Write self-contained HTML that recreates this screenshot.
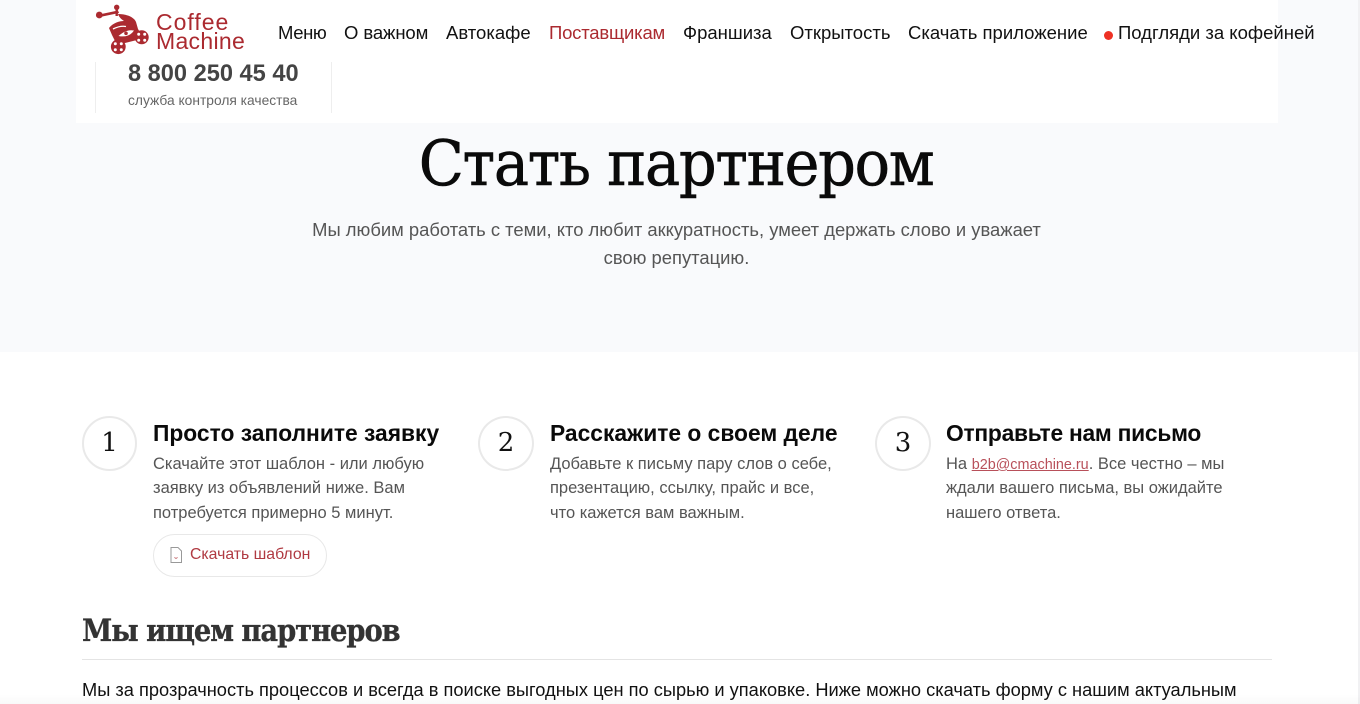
<!DOCTYPE html>
<html lang="ru">
<head>
<meta charset="utf-8">
<title>Стать партнером</title>
<style>
html,body{margin:0;padding:0;}
body{position:relative;width:1360px;height:704px;overflow:hidden;background:#fff;font-family:"Liberation Sans",Arial,sans-serif;color:#000;}
.t{position:absolute;white-space:nowrap;}
.a{position:absolute;}
.nav{top:21px;font-size:18.5px;line-height:23px;color:#111;}
.n{width:55px;height:55px;border:2px solid #e9e9e9;border-radius:50%;box-sizing:border-box;text-align:center;top:416px;font-family:"DejaVu Serif","Liberation Serif",serif;font-size:26px;line-height:50px;color:#111;}
.h3{top:419px;font-size:22.8px;line-height:28px;font-weight:bold;color:#0a0a0a;}
.p{top:452px;font-size:16.5px;line-height:24px;color:#555;}
.p div+div+div{margin-top:1px;}
</style>
</head>
<body>
<div class="a" style="left:0;top:0;width:1360px;height:352px;background:#f9fafc"></div>
<div class="a" style="left:76px;top:0;width:1202px;height:123px;background:#fff"></div>
<div class="a" style="left:1358px;top:0;width:2px;height:704px;background:#f1f1f3"></div>

<svg class="a" style="left:93px;top:2px" width="60" height="54" viewBox="0 0 60 54">
<g fill="#ab2a30">
<circle cx="6.300" cy="13" r="3.400"/>
<path d="M6 12.500 L25 8.500 L26 11 L7 15 Z"/>
<circle cx="23.700" cy="5.300" r="2.700"/>
<rect x="22.500" y="5" width="2.400" height="9"/>
<path d="M25 12 C33 12 41 15 43 20 L45 27 L48 32 L44 38 L24 43 L19 33 L16 26 C20 21 26 19 31 19 C28 17 26 15 25 12 Z"/>
<circle cx="25.300" cy="44.700" r="7.400"/>
<circle cx="48.700" cy="35.300" r="7"/>
</g>
<path d="M20 27 Q27 23.500 33 24.500" fill="none" stroke="#fff" stroke-width="1.300"/>
<g fill="#fff">
<path d="M25.500 34 Q33 27 41 28.500 Q36 36 25.500 34 Z"/>
<circle cx="22.300" cy="41.700" r="1.500"/><circle cx="28.300" cy="41.700" r="1.500"/><circle cx="22.300" cy="47.700" r="1.500"/><circle cx="28.300" cy="47.700" r="1.500"/>
<circle cx="45.700" cy="32.300" r="1.500"/><circle cx="51.700" cy="32.300" r="1.500"/><circle cx="45.700" cy="38.300" r="1.500"/><circle cx="51.700" cy="38.300" r="1.500"/>
</g>
<circle cx="33" cy="31.300" r="1.800" fill="#ab2a30"/>
</svg>
<div class="t" style="left:156px;top:9px;font-size:23px;line-height:27px;color:#ab2a30;letter-spacing:1px">Coffee</div>
<div class="t" style="left:156px;top:28px;font-size:23px;line-height:27px;color:#ab2a30;letter-spacing:.3px">Machine</div>

<div class="t nav" style="left:278px;letter-spacing:-.4px">Меню</div>
<div class="t nav" style="left:344px;letter-spacing:-.1px">О важном</div>
<div class="t nav" style="left:446px">Автокафе</div>
<div class="t nav" style="left:549px;color:#ab2a30;letter-spacing:-.2px">Поставщикам</div>
<div class="t nav" style="left:683px">Франшиза</div>
<div class="t nav" style="left:790px">Открытость</div>
<div class="t nav" style="left:908px">Скачать приложение</div>
<div class="a" style="left:1104px;top:31px;width:9px;height:9px;border-radius:50%;background:#ee3124"></div>
<div class="t nav" style="left:1118px">Подгляди за кофейней</div>

<div class="a" style="left:95px;top:62px;width:1px;height:51px;background:#eee"></div>
<div class="a" style="left:331px;top:62px;width:1px;height:51px;background:#eee"></div>
<div class="t" style="left:128px;top:60px;font-size:23.6px;line-height:29px;font-weight:bold;color:#444">8 800 250 45 40</div>
<div class="t" style="left:128px;top:92px;font-size:13.8px;line-height:18px;color:#666">служба контроля качества</div>

<div class="t" style="left:676px;top:125px;transform:translateX(-50%) scaleX(.938);font-family:'DejaVu Serif','Liberation Serif',serif;font-size:63px;line-height:78px;color:#0a0a0a;letter-spacing:-1.5px;-webkit-text-stroke:.6px #0a0a0a">Стать партнером</div>
<div class="t" style="left:0;width:1353px;text-align:center;top:216px;font-size:18.4px;line-height:28px;color:#555">Мы любим работать с теми, кто любит аккуратность, умеет держать слово и уважает<br>свою репутацию.</div>

<div class="a n" style="left:82px">1</div>
<div class="t h3" style="left:153px">Просто заполните заявку</div>
<div class="t p" style="left:153px"><div>Скачайте этот шаблон - или любую</div><div>заявку из объявлений ниже. Вам</div><div>потребуется примерно 5 минут.</div></div>
<div class="a" style="left:153px;top:534px;width:174px;height:43px;box-sizing:border-box;border:1px solid #e8e8e8;border-radius:22px"></div>
<svg class="a" style="left:169px;top:546px" width="14" height="18" viewBox="0 0 14 18"><path d="M2 1.500H9L12.500 5V16.500H2Z" fill="none" stroke="#999" stroke-width="1"/><path d="M5.500 11.500Q7 13 8.500 11.500" fill="none" stroke="#ab2a30" stroke-width=".7"/></svg>
<div class="t" style="left:190px;top:544px;font-size:15.8px;line-height:21px;color:#b03a42">Скачать шаблон</div>

<div class="a n" style="left:478px;width:56px">2</div>
<div class="t h3" style="left:550px">Расскажите о своем деле</div>
<div class="t p" style="left:550px"><div>Добавьте к письму пару слов о себе,</div><div>презентацию, ссылку, прайс и все,</div><div>что кажется вам важным.</div></div>

<div class="a n" style="left:875px;width:56px">3</div>
<div class="t h3" style="left:946px;letter-spacing:-.25px">Отправьте нам письмо</div>
<div class="t p" style="left:946px"><div>На <span style="color:#b8505a;text-decoration:underline;font-size:14.4px;line-height:0">b2b@cmachine.ru</span>. Все честно – мы</div><div>ждали вашего письма, вы ожидайте</div><div>нашего ответа.</div></div>

<div class="t" style="left:82px;top:609px;transform-origin:left center;transform:scaleX(.883);font-family:'DejaVu Serif','Liberation Serif',serif;font-weight:bold;font-size:31px;line-height:44px;color:#333;letter-spacing:-1.2px;-webkit-text-stroke:.3px #333">Мы ищем партнеров</div>
<div class="a" style="left:82px;top:659px;width:1190px;height:1px;background:#e4e4e4"></div>
<div class="t" style="left:82px;top:678px;font-size:18.25px;line-height:24px;color:#111">Мы за прозрачность процессов и всегда в поиске выгодных цен по сырью и упаковке. Ниже можно скачать форму с нашим актуальным</div>
<div class="a" style="left:0;top:694px;width:1360px;height:10px;background:linear-gradient(rgba(0,0,0,0),rgba(0,0,0,.025))"></div>
</body>
</html>
